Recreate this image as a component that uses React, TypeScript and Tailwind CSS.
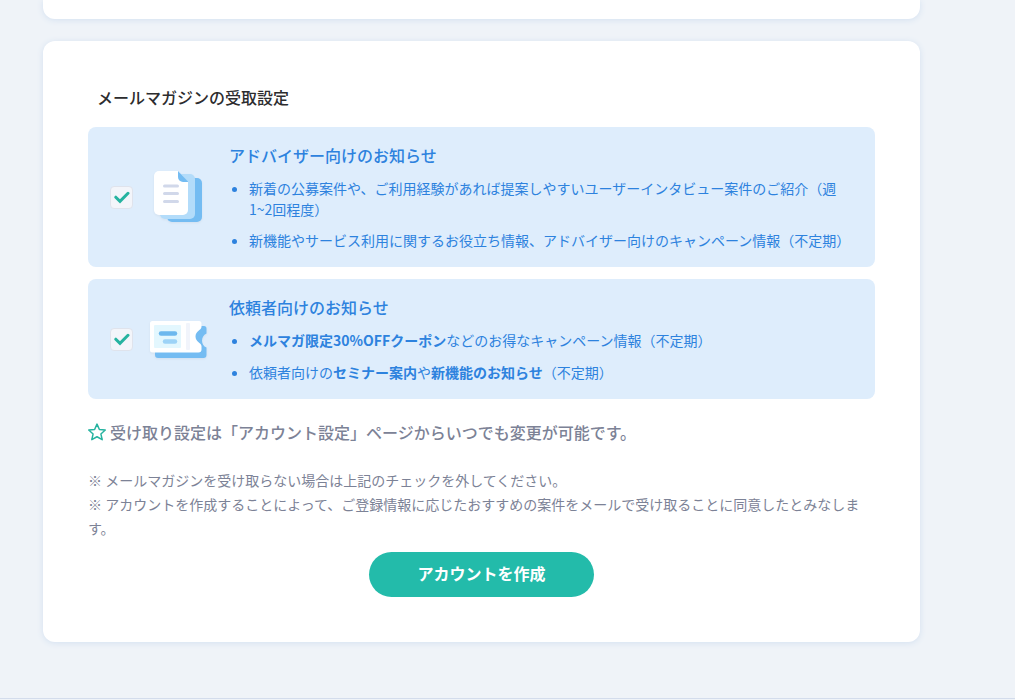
import type { ReactNode } from "react";

function DocumentsIcon() {
  return (
    <svg viewBox="0 0 60 60" className="size-[60px] shrink-0 drop-shadow-xs" aria-hidden="true">
      <rect x="19" y="11" width="35" height="44" rx="5" fill="#74bcf2" />
      <rect x="12" y="7" width="35" height="45" rx="5" fill="#b3dcfa" />
      <path d="M11 4h19l10 11v28a5 5 0 0 1-5 5H11a5 5 0 0 1-5-5V9a5 5 0 0 1 5-5z" fill="#fff" />
      <path d="M30 4l10 10.500v.500h-5a5 5 0 0 1-5-5z" fill="#74bcf2" />
      <path d="M16.500 19h13M16.500 26.500h13M16.500 34.500h13" stroke="#d1d8ea" strokeWidth="3" strokeLinecap="round" />
    </svg>
  );
}

function TicketIcon() {
  return (
    <svg viewBox="0 0 60 60" className="size-[60px] shrink-0 drop-shadow-xs" aria-hidden="true">
      <path
        d="M10 17h46a2.500 2.500 0 0 1 2.500 2.500v5c-6 2.500-6 12 0 14v7.500a3 3 0 0 1-3 3H10a3 3 0 0 1-3-3V20a3 3 0 0 1 3-3z"
        fill="#74bcf2"
      />
      <path
        d="M4.500 12H51a2.500 2.500 0 0 1 2.500 2.500v3.500c-.5 3.500-6 4-6 9.500s5.500 6 6 9.500V40.500a3 3 0 0 1-3 3H4.500a2.500 2.500 0 0 1-2.500-2.500V14.500A2.500 2.500 0 0 1 4.500 12z"
        fill="#fff"
      />
      <rect x="6" y="16" width="27" height="23" rx="1" fill="#e3f7fe" />
      <rect x="38" y="14" width="4" height="27" rx="1" fill="#f1f4fb" />
      <path d="M13 24.500h14" stroke="#6cb8ee" strokeWidth="4.500" strokeLinecap="round" />
      <path d="M17 32.500h10" stroke="#9dd3f7" strokeWidth="4.500" strokeLinecap="round" />
    </svg>
  );
}

function Option({
  id,
  title,
  icon,
  roomy = false,
  children,
}: {
  id: string;
  title: string;
  icon: ReactNode;
  roomy?: boolean;
  children: ReactNode;
}) {
  return (
    <div className="flex items-center rounded-lg bg-[#deedfc] px-[22px] py-4 text-[#2d82de]">
      <span className="mr-[15px] grid size-[23px] shrink-0 place-items-center">
        <input
          id={id}
          type="checkbox"
          defaultChecked
          className="peer col-start-1 row-start-1 size-[23px] cursor-pointer appearance-none rounded-sm border border-[#dfe3ec] bg-[#f3f5fa]"
        />
        <svg
          viewBox="0 0 16 14"
          className="pointer-events-none invisible col-start-1 row-start-1 h-[14px] w-4 peer-checked:visible"
          fill="none"
          stroke="#26b3a0"
          strokeWidth="3"
          strokeLinecap="round"
          aria-hidden="true"
        >
          <path d="M1.800 7.200l4.200 4.200L14 3.300" />
        </svg>
      </span>
      {icon}
      <div className="ml-[21px] min-w-0 flex-1">
        <label htmlFor={id} className="block cursor-pointer text-base leading-6 font-medium">
          {title}
        </label>
        <ul
          className={`mt-[11px] list-disc pl-5 text-sm leading-[21px] ${roomy ? "space-y-[11px]" : "space-y-[10px]"}`}
        >
          {children}
        </ul>
      </div>
    </div>
  );
}

export default function App() {
  return (
    <div className="min-h-screen bg-[#eff3f8] font-['Noto_Sans_CJK_JP',sans-serif] text-[#7c8296]">
      <main className="mr-[95px] ml-[43px]">
        <div className="h-[19px] rounded-b-xl bg-white shadow-[0_1px_6px_#d3e0f0]" />
        <form
          className="mt-[22px] rounded-xl bg-white px-[45px] pt-11 pb-[45px] shadow-[0_1px_6px_#d3e0f0]"
          onSubmit={(event) => event.preventDefault()}
        >
          <h2 className="pl-[9px] text-base leading-6 font-medium text-[#2c2c2e]">メールマガジンの受取設定</h2>
          <div className="mt-[18px] space-y-3">
            <Option id="advisor-news" title="アドバイザー向けのお知らせ" icon={<DocumentsIcon />}>
              <li>
                新着の公募案件や、ご利用経験があれば提案しやすいユーザーインタビュー案件のご紹介（週1~2回程度）
              </li>
              <li>新機能やサービス利用に関するお役立ち情報、アドバイザー向けのキャンペーン情報（不定期）</li>
            </Option>
            <Option id="client-news" title="依頼者向けのお知らせ" icon={<TicketIcon />} roomy>
              <li>
                <b>メルマガ限定30%OFFクーポン</b>などのお得なキャンペーン情報（不定期）
              </li>
              <li>
                依頼者向けの<b>セミナー案内</b>や<b>新機能のお知らせ</b>（不定期）
              </li>
            </Option>
          </div>
          <p className="mt-[21px] flex items-center gap-1 text-base leading-6 font-medium">
            <svg
              viewBox="0 0 24 24"
              className="size-[18px] shrink-0"
              fill="none"
              stroke="#26b3a0"
              strokeWidth="2"
              strokeLinejoin="round"
              aria-hidden="true"
            >
              <path d="M12 1.500l3.200 7.100 7.800.8-5.800 5.200 1.700 7.600-6.900-3.900-6.900 3.900 1.700-7.600L1 9.400l7.800-.8z" />
            </svg>
            受け取り設定は「アカウント設定」ページからいつでも変更が可能です。
          </p>
          <div className="mt-6 text-sm leading-6">
            <p>※ メールマガジンを受け取らない場合は上記のチェックを外してください。</p>
            <p>
              ※ アカウントを作成することによって、ご登録情報に応じたおすすめの案件をメールで受け取ることに同意したとみなします。
            </p>
          </div>
          <button
            type="submit"
            className="mx-auto mt-3 block h-[45px] w-[225px] cursor-pointer rounded-full bg-[#23bbaa] pb-1 text-base font-bold text-white"
          >
            アカウントを作成
          </button>
        </form>
      </main>
      <footer className="mt-14 border-t border-[#d3dcec]" />
    </div>
  );
}
